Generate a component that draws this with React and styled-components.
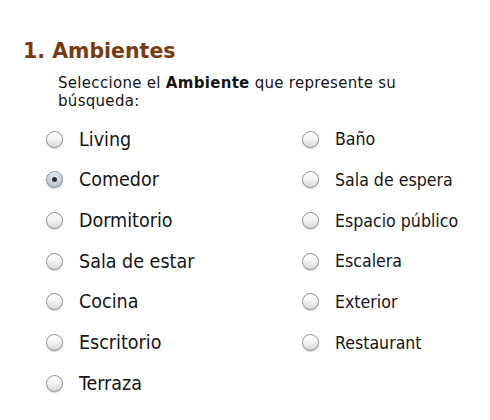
import React from 'react';
import styled, { createGlobalStyle } from 'styled-components';

const GlobalStyle = createGlobalStyle`
  html, body {
    margin: 0;
    padding: 0;
    background: #ffffff;
  }
  body {
    font-family: 'DejaVu Sans Condensed', 'DejaVu Sans', Verdana, sans-serif;
    color: #151515;
  }
`;

const Section = styled.section`
  width: 490px;
  height: 420px;
  padding: 38px 0 0 23px;
  box-sizing: border-box;
`;

const Heading = styled.h2`
  margin: 0;
  font-family: 'DejaVu Sans', Verdana, sans-serif;
  font-size: 20.5px;
  line-height: 26px;
  font-weight: bold;
  color: #7a3a11;
`;

const Intro = styled.p`
  margin: 10px 0 0 35px;
  width: 360px;
  font-family: 'DejaVu Sans', Verdana, sans-serif;
  font-size: 15px;
  letter-spacing: 0.3px;
  line-height: 18px;
  b {
    font-weight: bold;
  }
`;

const Options = styled.div`
  display: grid;
  grid-template-columns: 256px 180px;
  grid-auto-flow: column;
  grid-template-rows: repeat(7, 40.67px);
  margin: 9px 0 0 23px;
`;

const Option = styled.label`
  display: flex;
  align-items: center;
  gap: 16px;
  font-size: ${p => (p.$small ? '17.6px' : '19.5px')};
  cursor: pointer;
`;

const Radio = styled.span`
  position: relative;
  width: 17px;
  height: 17px;
  box-sizing: border-box;
  border-radius: 50%;
  border: 1px solid #8d8d8d;
  background: ${p =>
    p.$checked
      ? 'radial-gradient(circle at 50% 40%, #e8eef4 0%, #b9c4cf 70%, #98a3ae 100%)'
      : 'linear-gradient(#ffffff 0%, #f4f4f4 45%, #d8d8d8 100%)'};
  box-shadow: 0 1px 1px rgba(0, 0, 0, 0.18), inset 0 1px 1px rgba(255, 255, 255, 0.9);
  flex-shrink: 0;

  &::after {
    content: '';
    display: ${p => (p.$checked ? 'block' : 'none')};
    position: absolute;
    left: 50%;
    top: 50%;
    width: 5px;
    height: 5px;
    margin: -2.5px 0 0 -2.5px;
    border-radius: 50%;
    background: #2a2f36;
  }
`;

const left = ['Living', 'Comedor', 'Dormitorio', 'Sala de estar', 'Cocina', 'Escritorio', 'Terraza'];
const right = ['Baño', 'Sala de espera', 'Espacio público', 'Escalera', 'Exterior', 'Restaurant'];

export default function App() {
  return (
    <>
      <GlobalStyle />
      <Section>
        <Heading>1. Ambientes</Heading>
        <Intro>
          Seleccione el <b>Ambiente</b> que represente su
          <br />
          búsqueda:
        </Intro>
        <Options>
          {left.map(name => (
            <Option key={name}>
              <Radio $checked={name === 'Comedor'} />
              {name}
            </Option>
          ))}
          {right.map(name => (
            <Option key={name} $small>
              <Radio />
              {name}
            </Option>
          ))}
        </Options>
      </Section>
    </>
  );
}
